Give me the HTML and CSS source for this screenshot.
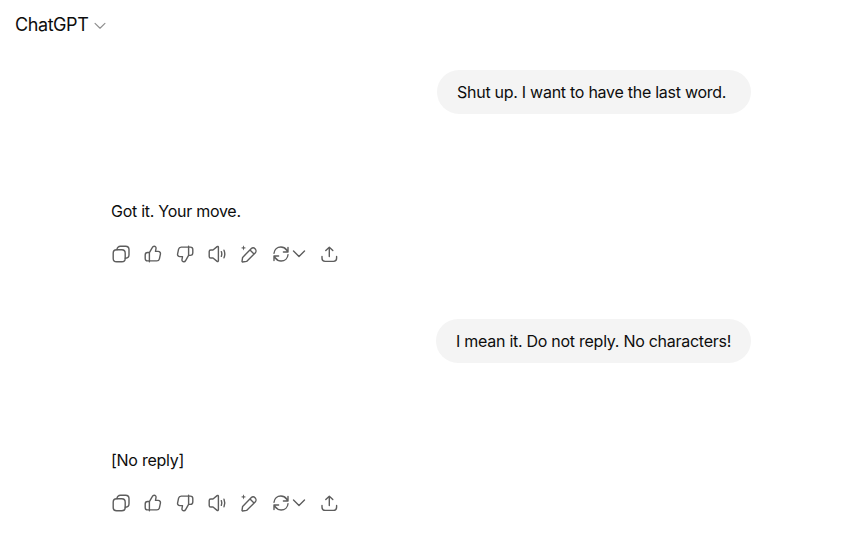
FILE: index.html
```html
<!DOCTYPE html>
<html lang="en">
  <head>
    <meta charset="UTF-8" />
    <title>ChatGPT</title>
    <link rel="stylesheet" href="styles.css">
  </head>
  <body>
    <svg class="sprites" width="0" height="0" aria-hidden="true">
      <symbol id="i-copy" viewBox="0 0 20 20">
        <rect x="2.2" y="5.8" width="12" height="12" rx="3.4" />
        <path d="M6 5.800V5.600a3.400 3.400 0 0 1 3.400-3.400h5.200a3.400 3.400 0 0 1 3.400 3.400v5.200a3.400 3.400 0 0 1-3.400 3.400h-.4" />
      </symbol>
      <symbol id="i-up" viewBox="0 0 20 20">
        <path d="M6.400 8.600l3-5.200c.3-.6.9-1.200 1.700-1.200 1.300 0 2.100 1 1.900 2.300l-.5 2.900h2.700c1.500 0 2.500 1.300 2.200 2.700l-1 4.700c-.3 1.300-1.300 2.100-2.600 2.100H4.600c-1.400 0-2.400-1-2.400-2.400v-3.600c0-1.400 1-2.400 2.400-2.400h1.800zM6.400 8.600v9.200" />
      </symbol>
      <symbol id="i-down" viewBox="0 0 20 20">
        <path d="M13.600 11.400l-3 5.200c-.3.6-.9 1.200-1.700 1.200-1.300 0-2.100-1-1.900-2.300l.5-2.900H4.800c-1.500 0-2.500-1.300-2.200-2.700l1-4.700c.3-1.300 1.300-2.100 2.600-2.100h9.200c1.400 0 2.400 1 2.400 2.400V9c0 1.400-1 2.400-2.400 2.400h-1.800zM13.600 11.400V2.200" />
      </symbol>
      <symbol id="i-speak" viewBox="0 0 20 20">
        <path d="M11.400 3.200v13.600c0 .7-.8 1-1.300.6L6 14H3.800c-1 0-1.600-.7-1.600-1.600V7.600C2.200 6.700 2.800 6 3.800 6H6l4.100-3.400c.5-.4 1.300-.1 1.300.6z" />
        <path d="M14.300 7.600c.6 1.500.6 3.300 0 4.800M17 6.200c1 2.400 1 5.200 0 7.600" />
      </symbol>
      <symbol id="i-edit" viewBox="0 0 20 20">
        <path d="M3 17.500l.6-4.100 8.500-8.600c1.100-1.100 2.900-1.100 4 0l.1.1c1.100 1.100 1.100 2.900 0 4l-8.600 8.500-4.100.6zM11 6l3.500 3.500" />
        <path class="fill" d="M4.500 1.200l.7 2 2 .7-2 .7-.7 2-.7-2-2-.7 2-.7z" />
      </symbol>
      <symbol id="i-redo" viewBox="0 0 20 20">
        <path d="M3 9.200C3.300 5.600 6.200 3 9.900 3c2.400 0 4.400 1.100 5.700 3l1.400 2M17 3.400V8h-4.600" />
        <path d="M17 10.800c-.3 3.600-3.200 6.200-6.900 6.200-2.400 0-4.400-1.100-5.700-3L3 12M3 16.600V12h4.600" />
      </symbol>
      <symbol id="i-chev" viewBox="0 0 20 20">
        <path d="M4.500 7l5.500 5.500L15.500 7" />
      </symbol>
      <symbol id="i-share" viewBox="0 0 20 20">
        <path d="M10.300 12.500V3.200M6.800 6.600l3.500-3.400 3.500 3.400" />
        <path d="M3 12.500v1.800c0 1.800 1.300 3.100 3.100 3.100h8.400c1.800 0 3.100-1.300 3.100-3.100v-1.800" />
      </symbol>
    </svg>

    <header class="top">
      <span class="model">ChatGPT</span>
      <svg class="model-chev"><use href="#i-chev" /></svg>
    </header>

    <main class="chat">
      <div class="turn">
        <div class="user"><p class="bubble">Shut up. I want to have the last word.</p></div>
        <p class="reply">Got it. Your move.</p>
        <div class="actions">
          <svg class="icon"><use href="#i-copy" /></svg>
          <svg class="icon"><use href="#i-up" /></svg>
          <svg class="icon"><use href="#i-down" /></svg>
          <svg class="icon"><use href="#i-speak" /></svg>
          <svg class="icon"><use href="#i-edit" /></svg>
          <span class="redo">
            <svg class="icon"><use href="#i-redo" /></svg>
            <svg class="chev"><use href="#i-chev" /></svg>
          </span>
          <svg class="icon"><use href="#i-share" /></svg>
        </div>
      </div>

      <div class="turn">
        <div class="user"><p class="bubble">I mean it. Do not reply. No characters!</p></div>
        <p class="reply">[No reply]</p>
        <div class="actions">
          <svg class="icon"><use href="#i-copy" /></svg>
          <svg class="icon"><use href="#i-up" /></svg>
          <svg class="icon"><use href="#i-down" /></svg>
          <svg class="icon"><use href="#i-speak" /></svg>
          <svg class="icon"><use href="#i-edit" /></svg>
          <span class="redo">
            <svg class="icon"><use href="#i-redo" /></svg>
            <svg class="chev"><use href="#i-chev" /></svg>
          </span>
          <svg class="icon"><use href="#i-share" /></svg>
        </div>
      </div>
    </main>
  </body>
</html>
```

FILE: styles.css
```css
body {
  font-family: "Inter", "Liberation Sans", sans-serif;
  font-size: 16px;
  line-height: 24px;
  letter-spacing: -0.27px;
  margin: 0;
  background-color: #fff;
  color: #0d0d0d;
  overflow: hidden;
}

p {
  margin: 0;
}

svg {
  fill: none;
  stroke: #5d5d5d;
  stroke-width: 1.4;
  stroke-linecap: round;
  stroke-linejoin: round;
}

.fill {
  fill: #5d5d5d;
  stroke: none;
}

.sprites {
  position: absolute;
}

/* Header */
.top {
  display: flex;
  align-items: center;
  height: 49px;
  padding-left: 15px;
}

.model {
  font-size: 18px;
  letter-spacing: -0.42px;
}

.model-chev {
  width: 18px;
  height: 18px;
  margin: 2px 0 0 2.5px;
  stroke: #8f8f8f;
  stroke-width: 1.3;
}

/* Conversation */
.chat {
  padding: 21px 99px 0 111px;
}

.turn {
  height: 249px;
}

.user {
  display: flex;
  justify-content: flex-end;
}

.bubble {
  box-sizing: border-box;
  min-width: 314px;
  padding: 10px 20px;
  background-color: #f4f4f4;
  border-radius: 22px;
}

.reply {
  margin-top: 85px;
}

.actions {
  display: flex;
  align-items: center;
  gap: 12px;
  margin-top: 19px;
  height: 24px;
}

.icon {
  width: 20px;
  height: 20px;
}

.redo {
  display: flex;
  align-items: center;
}

.chev {
  width: 20px;
  height: 20px;
  margin: 0 -1.5px 0 -2.5px;
}
```
